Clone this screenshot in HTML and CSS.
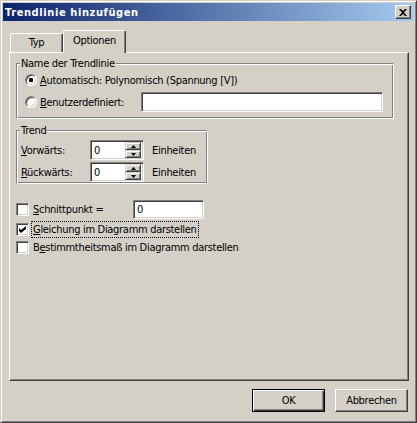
FILE: index.html
```html
<!DOCTYPE html>
<html>
<head>
<meta charset="utf-8">
<link rel="stylesheet" href="styles.css">
</head>
<body>
<div class="window">
  <div class="titlebar">
    <span class="title">Trendlinie hinzufügen</span>
    <span class="close"><svg width="8" height="7" viewBox="0 0 8 7"><path d="M0 0h2l2 2 2-2h2L5 3.5 8 7H6L4 5 2 7H0l3-3.5z" fill="#000"/></svg></span>
  </div>
  <div class="body">
    <div class="tabs">
      <div class="tab typ">Typ</div>
      <div class="tab active">Optionen</div>
    </div>
    <div class="panel">
      <div class="group g1">
        <span class="legend">Name der Trendlinie</span>
        <div class="row">
          <span class="radio on"><span class="dot"></span></span>
          <span class="lbl"><u>A</u>utomatisch: Polynomisch (Spannung [V])</span>
        </div>
        <div class="row r2">
          <span class="radio"></span>
          <span class="lbl custom"><u>B</u>enutzerdefiniert:</span>
          <span class="edit wide"></span>
        </div>
      </div>
      <div class="group g2">
        <span class="legend">Trend</span>
        <div class="row">
          <span class="lbl trendlbl"><u>V</u>orwärts:</span>
          <span class="edit spin"><span class="val">0</span>
            <span class="spinbtns">
              <span class="sb"><svg width="5" height="3" viewBox="0 0 5 3"><path d="M2.5 0L5 3H0z" fill="#000"/></svg></span>
              <span class="sb"><svg width="5" height="3" viewBox="0 0 5 3"><path d="M0 0h5L2.5 3z" fill="#000"/></svg></span>
            </span>
          </span>
          <span class="unit">Einheiten</span>
        </div>
        <div class="row r2">
          <span class="lbl trendlbl"><u>R</u>ückwärts:</span>
          <span class="edit spin"><span class="val">0</span>
            <span class="spinbtns">
              <span class="sb"><svg width="5" height="3" viewBox="0 0 5 3"><path d="M2.5 0L5 3H0z" fill="#000"/></svg></span>
              <span class="sb"><svg width="5" height="3" viewBox="0 0 5 3"><path d="M0 0h5L2.5 3z" fill="#000"/></svg></span>
            </span>
          </span>
          <span class="unit">Einheiten</span>
        </div>
      </div>
      <div class="checks">
        <div class="crow c1">
          <span class="check"></span>
          <span class="clbl schnitt"><u>S</u>chnittpunkt =</span>
          <span class="edit small"><span class="val">0</span></span>
        </div>
        <div class="crow c2">
          <span class="check"><svg width="7" height="7" viewBox="0 0 7 7"><path d="M0 2l2 2 5-4v3L2 7 0 5z" fill="#000"/></svg></span>
          <span class="clbl focus"><u>G</u>leichung im Diagramm darstellen</span>
        </div>
        <div class="crow c3">
          <span class="check"></span>
          <span class="clbl">B<u>e</u>stimmtheitsmaß im Diagramm darstellen</span>
        </div>
      </div>
    </div>
    <div class="buttons">
      <span class="btn default">OK</span>
      <span class="btn">Abbrechen</span>
    </div>
  </div>
</div>
</body>
</html>
```
FILE: styles.css
```css
* { box-sizing: border-box; }
body {
  margin: 0;
  background: #d4d0c8;
  font-family: "DejaVu Sans Condensed", "Liberation Sans", sans-serif;
  font-size: 11px;
  line-height: 13px;
  letter-spacing: -0.3px;
  color: #000;
}
.window {
  width: 417px;
  height: 423px;
  border: 1px solid;
  border-color: #d4d0c8 #404040 #404040 #d4d0c8;
  box-shadow: inset 1px 1px #fff, inset -1px -1px #808080;
  padding: 2px;
  display: flex;
  flex-direction: column;
  background: #d4d0c8;
}
.titlebar {
  height: 18px;
  flex: none;
  background: linear-gradient(to right, #0a246a, #a6caf0);
  display: flex;
  align-items: center;
  padding: 0 3px 0 2px;
}
.title {
  flex: 1;
  color: #fff;
  font-weight: bold;
  letter-spacing: 0.6px;
}
.close {
  width: 16px;
  height: 14px;
  background: #d4d0c8;
  border: 1px solid;
  border-color: #fff #404040 #404040 #fff;
  box-shadow: inset -1px -1px #808080;
  display: flex;
  align-items: center;
  justify-content: center;
}
.body {
  flex: 1;
  padding: 0 5px 0 6px;
  display: flex;
  flex-direction: column;
}
.tabs {
  height: 31px;
  flex: none;
  display: flex;
  align-items: flex-end;
  padding-left: 1px;
}
.tab {
  height: 19px;
  border: 1px solid;
  border-bottom: none;
  border-color: #fff #404040 #404040 #fff;
  box-shadow: inset -1px 0 #808080;
  border-radius: 2px 2px 0 0;
  display: flex;
  align-items: center;
  justify-content: center;
  padding-bottom: 1px;
}
.typ { width: 53px; }
.tab.active {
  width: 63px;
  height: 23px;
  margin-bottom: -1px;
  background: #d4d0c8;
  z-index: 1;
  padding-bottom: 3px;
}
.panel {
  height: 329px;
  flex: none;
  border: 1px solid;
  border-color: #fff #404040 #404040 #fff;
  box-shadow: inset -1px -1px #808080;
  padding: 10px 0 0 6px;
}
.group {
  position: relative;
  border: 1px solid;
  border-color: #808080 #fff #fff #808080;
  box-shadow: inset 1px 1px #fff, inset -1px -1px #808080;
}
.legend {
  position: absolute;
  top: -7px;
  left: 3px;
  padding: 0 1px;
  background: #d4d0c8;
}
.g1 {
  width: 378px;
  height: 56px;
  padding: 6px 0 0 8px;
}
.row {
  height: 20px;
  display: flex;
  align-items: center;
}
.r2 { margin-top: 2px; }
.radio {
  width: 12px;
  height: 12px;
  border-radius: 50%;
  background: #fff;
  border: 1px solid;
  border-color: #808080 #fff #fff #808080;
  box-shadow: inset 1px 1px #404040, inset -1px -1px #d4d0c8;
  margin-right: 3px;
  display: flex;
  align-items: center;
  justify-content: center;
  flex: none;
}
.dot {
  width: 4px;
  height: 4px;
  border-radius: 1px;
  background: #000;
}
.lbl { white-space: nowrap; }
.custom { width: 101px; flex: none; }
.edit {
  background: #fff;
  border: 1px solid;
  border-color: #808080 #fff #fff #808080;
  box-shadow: inset 1px 1px #404040, inset -1px -1px #d4d0c8;
  display: flex;
  align-items: center;
  flex: none;
}
.wide { width: 242px; height: 20px; }
.g2 {
  width: 192px;
  height: 54px;
  margin-top: 11px;
  padding: 9px 0 0 4px;
}
.trendlbl { width: 69px; flex: none; }
.spin {
  width: 54px;
  height: 20px;
  padding: 2px 2px 2px 2px;
}
.val { flex: 1; padding-left: 1px; }
.spinbtns {
  width: 16px;
  height: 16px;
  display: flex;
  flex-direction: column;
}
.sb {
  height: 8px;
  background: #d4d0c8;
  border: 1px solid;
  border-color: #d4d0c8 #404040 #404040 #d4d0c8;
  box-shadow: inset 1px 1px #fff, inset -1px -1px #808080;
  display: flex;
  align-items: center;
  justify-content: center;
}
.unit { margin-left: 8px; }
.checks {
  margin-top: 16px;
  display: flex;
  flex-direction: column;
}
.crow {
  display: flex;
  align-items: center;
}
.c1 { height: 19px; }
.c2 { height: 19px; margin-top: 1px; }
.c3 { height: 17px; }
.check {
  width: 13px;
  height: 13px;
  background: #fff;
  border: 1px solid;
  border-color: #808080 #fff #fff #808080;
  box-shadow: inset 1px 1px #404040, inset -1px -1px #d4d0c8;
  margin-right: 2px;
  display: flex;
  align-items: center;
  justify-content: center;
  flex: none;
}
.clbl {
  border: 1px dotted transparent;
  padding: 1px 1px;
  white-space: nowrap;
}
.focus { border-color: #000; }
.schnitt { width: 102px; flex: none; }
.small { width: 71px; height: 19px; padding-left: 2px; }
.buttons {
  margin-top: 8px;
  display: flex;
  justify-content: flex-end;
  gap: 10px;
  padding-right: 1px;
}
.btn {
  width: 73px;
  height: 23px;
  border: 1px solid;
  border-color: #fff #404040 #404040 #fff;
  box-shadow: inset -1px -1px #808080;
  display: flex;
  align-items: center;
  justify-content: center;
}
.btn.default {
  border-color: #000;
  box-shadow: inset 1px 1px #fff, inset -1px -1px #404040, inset -2px -2px #808080;
}
```
